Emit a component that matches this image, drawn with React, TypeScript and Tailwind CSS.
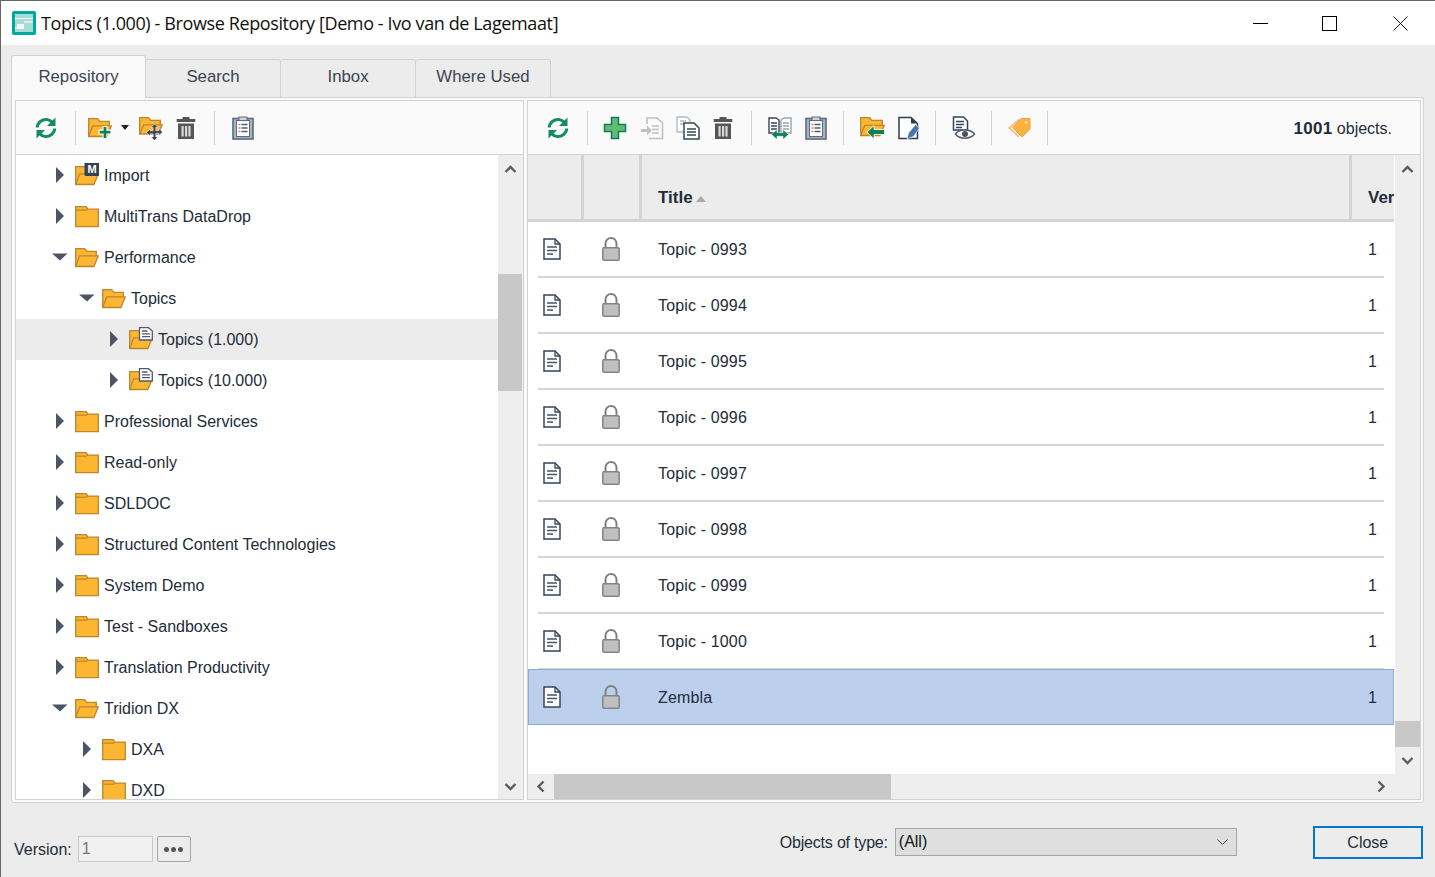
import React from 'react';

const STROKE = '#bd852e';
const FILL = '#fdb632';

const Refresh: React.FC = () => (
  <svg width="24" height="24" viewBox="0 0 24 24" fill="none">
    <g>
      <path d="M3.2 11.5C3.6 6.4 8.6 2.6 13.6 3.6c1.8.4 3 1.1 4.2 2.3" stroke="#188a62" strokeWidth="3" />
      <path d="M21.5 1.5v8.5h-8.5z" fill="#188a62" />
    </g>
    <g transform="rotate(180 12 12)">
      <path d="M3.2 11.5C3.6 6.4 8.6 2.6 13.6 3.6c1.8.4 3 1.1 4.2 2.3" stroke="#188a62" strokeWidth="3" />
      <path d="M21.5 1.5v8.5h-8.5z" fill="#188a62" />
    </g>
  </svg>
);

const FolderClosed: React.FC = () => (
  <svg width="24" height="24" viewBox="0 0 24 24">
    <path d="M.7 2.7h10.6l1.5 2.4h10.5v17.6H.7z" fill={FILL} stroke={STROKE} strokeWidth="1.3" />
    <path d="M.7 6.2h10.8l1.3-1.1" fill="none" stroke={STROKE} strokeWidth="1.2" />
  </svg>
);

const FolderOpen: React.FC<{ children?: React.ReactNode }> = ({ children }) => (
  <svg width="24" height="24" viewBox="0 0 24 24">
    <path d="M.7 21.5V3.7h9l2 2.6h9.6v4.5" fill={FILL} stroke={STROKE} strokeWidth="1.3" />
    <path d="M.7 21.5l4-10.7h18.6l-4.4 10.7z" fill={FILL} stroke={STROKE} strokeWidth="1.3" />
    {children}
  </svg>
);

const FolderImport: React.FC = () => (
  <FolderOpen>
    <rect x="9.500" y="-1" width="15" height="14" rx="1.500" fill="#37424f" />
    <text x="17" y="9.500" fontSize="11" fontWeight="700" fill="#fff" textAnchor="middle" fontFamily="Liberation Sans, sans-serif">M</text>
  </FolderOpen>
);

const FolderDoc: React.FC = () => (
  <FolderOpen>
    <path d="M10.500.7h9l3.800 3.300v9H10.500z" fill="#fff" stroke="#4f5a6c" strokeWidth="1.300" />
    <path d="M13 4h5.500M13 6.800h8M13 9.600h8" stroke="#4f5a6c" strokeWidth="1.300" />
  </FolderOpen>
);

const Trash: React.FC = () => (
  <svg width="24" height="24" viewBox="0 0 24 24" fill="#555">
    <path d="M8.5 1h7v2h5.8v3H2.7V3h5.8z" />
    <path d="M4 7.5h16V23H4z" />
    <path d="M7.5 10h2.2v10.5H7.5zM11 10h2.2v10.5H11zM14.4 10h2.2v10.5h-2.2z" fill="#d8d8d8" />
  </svg>
);

const Clipboard: React.FC = () => (
  <svg width="24" height="24" viewBox="0 0 24 24">
    <rect x="2" y="2.5" width="20" height="20.5" fill="#a9b4c5" stroke="#5c6a7e" strokeWidth="1.6" />
    <rect x="5.5" y="4.5" width="13" height="16" fill="#fff" stroke="#5c6a7e" strokeWidth="1" />
    <rect x="8" y="1" width="8" height="3.6" fill="#cfd5de" stroke="#5c6a7e" strokeWidth="1" />
    <path d="M7.5 8.5h2M7.5 12h2M7.5 15.5h2" stroke="#c9826b" strokeWidth="1.4" />
    <path d="M10.5 8.5h6M10.5 12h6M10.5 15.5h6" stroke="#4d5a6d" strokeWidth="1.4" />
  </svg>
);

const FolderPlus: React.FC = () => (
  <svg width="26" height="24" viewBox="0 0 26 24">
    <path d="M.7 20.5V2.7h9l2 2.6h9.6v4.5" fill={FILL} stroke={STROKE} strokeWidth="1.3" />
    <path d="M.7 20.5l4-10.7h18.6l-4.4 10.7z" fill={FILL} stroke={STROKE} strokeWidth="1.3" />
    <path d="M14.500 10h5v3.500h4v5h-4V23h-5v-4.500h-4v-5h4z" fill="#fff" />
    <path d="M15.600 11h2.800v3.700h4v2.800h-4V22h-2.800v-4.500h-4v-2.800h4z" fill="#11805a" />
  </svg>
);

const FolderMove: React.FC = () => (
  <svg width="24" height="24" viewBox="0 0 24 24">
    <path d="M.7 18V1.700h9l2 2.600h9.600v5" fill={FILL} stroke={STROKE} strokeWidth="1.300" />
    <path d="M.7 18l4-9.200h18.600L19 18z" fill={FILL} stroke={STROKE} strokeWidth="1.300" />
    <path d="M15.500 8l3.500 3.500h-2.200v3.200H20v-2.200l3.500 3.500-3.500 3.500v-2.200h-3.200V21H19l-3.500 3.500L12 21h2.200v-3.200H11V20l-3.500-3.500L11 13v1.700h3.200v-3.200H12z" fill="#36455e" stroke="#fff" strokeWidth=".5" />
  </svg>
);

const PlusIcon: React.FC = () => (
  <svg width="24" height="24" viewBox="0 0 24 24">
    <path d="M8.500 1.500h7v7h7v7h-7v7h-7v-7h-7v-7h7z" fill="#62bb72" stroke="#0f7f55" strokeWidth="1.500" />
  </svg>
);

const DocArrow: React.FC = () => (
  <svg width="24" height="24" viewBox="0 0 24 24" fill="none" stroke="#c0c0c0" strokeWidth="1.600">
    <path d="M7 8V2h10l5.500 5v15.500H9" />
    <path d="M12 10h7M12 13.500h7M12 17h7" />
    <path d="M1 13h6V9.500l5 5-5 5V16H1z" fill="#c0c0c0" stroke="none" />
  </svg>
);

const CopyDoc: React.FC = () => (
  <svg width="24" height="24" viewBox="0 0 24 24" fill="none">
    <path d="M1 1h10l3 3v12H1z" fill="#fff" stroke="#b5b9c0" strokeWidth="1.300" />
    <path d="M4 5h6M4 8h6" stroke="#b5b9c0" strokeWidth="1.300" />
    <path d="M8 7h10l5 5v11H8z" fill="#fff" stroke="#37455a" strokeWidth="1.500" />
    <path d="M11 13h9M11 16h9M11 19h9" stroke="#37455a" strokeWidth="1.300" />
  </svg>
);

const Compare: React.FC = () => (
  <svg width="24" height="24" viewBox="0 0 24 24" fill="none">
    <path d="M1 2h7l3 2v13H1z" fill="#fff" stroke="#36445a" strokeWidth="1.400" />
    <path d="M3 7h6M3 10h6M3 13h6" stroke="#36445a" strokeWidth="1.300" />
    <path d="M13 4l3-2h7v15H13z" fill="#fff" stroke="#9aa3b0" strokeWidth="1.400" />
    <path d="M15 7h6M15 10h6M15 13h6" stroke="#9aa3b0" strokeWidth="1.300" />
    <path d="M3.500 18.500l5.500-5v3.200h6v-3.200l5.500 5-5.500 5v-3.200H9v3.200z" fill="#11805a" stroke="#fff" strokeWidth=".5" />
  </svg>
);

const FolderBack: React.FC = () => (
  <svg width="25" height="24" viewBox="0 0 25 24">
    <path d="M.7 19.500V1.700h9l2 2.600h10.600v5" fill={FILL} stroke={STROKE} strokeWidth="1.300" />
    <path d="M.7 19.500l4-10.200h19.600L20 19.500z" fill={FILL} stroke={STROKE} strokeWidth="1.300" />
    <path d="M14 9.500v4h10.500v5H14v4.500l-7-7z" fill="#11805a" stroke="#fff" strokeWidth=".8" />
  </svg>
);

const DocPen: React.FC = () => (
  <svg width="24" height="24" viewBox="0 0 24 24" fill="none">
    <path d="M2 1.500h12l6.500 6V22.500H2z" fill="#fff" stroke="#2f3d52" strokeWidth="1.500" />
    <path d="M14 1.500l6.500 6H14z" fill="#2f3d52" />
    <path d="M18.500 8.500l4 3.500-6 8.500-6.500 2.500 1.500-6z" fill="#4477b0" stroke="#fff" strokeWidth=".6" />
  </svg>
);

const DocEye: React.FC = () => (
  <svg width="24" height="24" viewBox="0 0 24 24" fill="none">
    <path d="M1.500 1h10l4 4v9H1.500z" fill="#fff" stroke="#36445a" strokeWidth="1.500" />
    <path d="M4 5.500h8M4 8.500h8M4 11.500h6" stroke="#36445a" strokeWidth="1.300" />
    <path d="M3.500 18c3.500-5.500 15-5.500 19 0-4 5.500-15.500 5.500-19 0z" fill="#fff" stroke="#555f6c" strokeWidth="1.500" />
    <circle cx="13" cy="18" r="3" fill="#4a5460" />
  </svg>
);

const TagIcon: React.FC = () => (
  <svg width="24" height="24" viewBox="0 0 24 24" fill="none">
    <path d="M12 3.500L2.200 12l9.800 9" stroke="#ecc48c" strokeWidth="1.800" />
    <path d="M14 2.500h9v10.500l-8 8-9.500-9.500z" fill="#fdb23f" stroke="#e8a63f" strokeWidth="1" />
    <circle cx="19.200" cy="6.200" r="1.300" fill="#fbe9cb" />
  </svg>
);

const ArrowRight: React.FC = () => (
  <svg width="10" height="16" viewBox="0 0 10 16"><path d="M1 0l8 8-8 8z" fill="#4b5566" /></svg>
);

const ArrowDown: React.FC = () => (
  <svg width="16" height="8" viewBox="0 0 16 8"><path d="M0 .5h15.500L8 7.500z" fill="#4b5566" /></svg>
);

const Chevron: React.FC<{ dir: 'up' | 'down' | 'left' | 'right' }> = ({ dir }) => {
  const d = {
    up: 'M1.500 8L6.500 3l5 5',
    down: 'M1.500 4l5 5 5-5',
    left: 'M8.500 1.500l-5 5 5 5',
    right: 'M4.500 1.500l5 5-5 5',
  }[dir];
  return (
    <svg width="13" height="13" viewBox="0 0 13 13" fill="none">
      <path d={d} stroke="#5c5c5c" strokeWidth="2.400" />
    </svg>
  );
};

const Separator: React.FC<{ className: string }> = ({ className }) => (
  <div className={`w-px h-[34px] bg-[#d2d2d2] ${className}`} />
);

const tree = [
  { label: 'Import', level: 0, open: false, icon: <FolderImport /> },
  { label: 'MultiTrans DataDrop', level: 0, open: false, icon: <FolderClosed /> },
  { label: 'Performance', level: 0, open: true, icon: <FolderOpen /> },
  { label: 'Topics', level: 1, open: true, icon: <FolderOpen /> },
  { label: 'Topics (1.000)', level: 2, open: false, icon: <FolderDoc />, selected: true },
  { label: 'Topics (10.000)', level: 2, open: false, icon: <FolderDoc /> },
  { label: 'Professional Services', level: 0, open: false, icon: <FolderClosed /> },
  { label: 'Read-only', level: 0, open: false, icon: <FolderClosed /> },
  { label: 'SDLDOC', level: 0, open: false, icon: <FolderClosed /> },
  { label: 'Structured Content Technologies', level: 0, open: false, icon: <FolderClosed /> },
  { label: 'System Demo', level: 0, open: false, icon: <FolderClosed /> },
  { label: 'Test - Sandboxes', level: 0, open: false, icon: <FolderClosed /> },
  { label: 'Translation Productivity', level: 0, open: false, icon: <FolderClosed /> },
  { label: 'Tridion DX', level: 0, open: true, icon: <FolderOpen /> },
  { label: 'DXA', level: 1, open: false, icon: <FolderClosed /> },
  { label: 'DXD', level: 1, open: false, icon: <FolderClosed /> },
];

const rows = ['Topic - 0993', 'Topic - 0994', 'Topic - 0995', 'Topic - 0996', 'Topic - 0997', 'Topic - 0998', 'Topic - 0999', 'Topic - 1000', 'Zembla'];

const levelPadding = ['pl-[36px]', 'pl-[63px]', 'pl-[90px]'];

const TreeRow: React.FC<{ item: (typeof tree)[number] }> = ({ item }) => (
  <div className={`flex items-center h-[41px] shrink-0 ${levelPadding[item.level]} ${item.selected ? 'bg-[#ececec]' : ''}`}>
    <div className="w-[16px] flex justify-center -mt-px">{item.open ? <ArrowDown /> : <ArrowRight />}</div>
    <div className="ml-[7px] -mt-[2px]">{item.icon}</div>
    <span className="ml-[5px] whitespace-nowrap">{item.label}</span>
  </div>
);

const TopicRow: React.FC<{ title: string; selected: boolean }> = ({ title, selected }) => (
  <div className={`h-[56px] shrink-0 ${selected ? '-mt-px pt-[2px] bg-[#bcd0ee] border border-[#8fabd8]' : ''}`}>
    <div className={`h-full flex items-center ${selected ? 'mx-[9px]' : 'mx-[10px] pt-[2px] border-b-2 border-[#d6d6d6]'}`}>
      <svg className="ml-[5px] -mt-[2px]" width="18" height="22" viewBox="0 0 18 22" fill="none">
        <path d="M1 1h11l5 5v15H1z" fill="#fff" stroke="#36445a" strokeWidth="1.500" />
        <path d="M12 1v5h5" stroke="#36445a" strokeWidth="1.300" />
        <path d="M4 9h10M4 12.500h10M4 16h6" stroke="#4a5667" strokeWidth="1.400" />
      </svg>
      <svg className="ml-[41px] -mt-[2px]" width="18" height="24" viewBox="0 0 18 24" fill="none">
        <path d="M3.500 11V6.500a5.500 5.500 0 0 1 11 0V11" stroke="#808080" strokeWidth="2" />
        <rect x=".8" y="10.800" width="16.400" height="12.400" rx="1" fill="#bfbfbf" stroke="#858585" strokeWidth="1.500" />
      </svg>
      <span className="ml-[38px] flex-1 tracking-[0.15px]">{title}</span>
      <span className="mr-[7px]">1</span>
    </div>
  </div>
);

const App: React.FC = () => {
  return (
    <div className="w-[1435px] h-[877px] overflow-hidden flex flex-col border-t border-l border-[#666] bg-[#ececec] text-[16px] text-[#232c39] font-['Liberation_Sans',Arial,sans-serif]">
      {/* Title bar */}
      <div className="h-[44px] shrink-0 bg-white flex items-center">
        <svg className="ml-[11px]" width="24" height="24" viewBox="0 0 24 24">
          <rect width="24" height="24" rx="2" fill="#00a99d" />
          <rect x="3" y="3" width="18" height="18" fill="#a5dcd8" />
          <path d="M3 7.500h18M12 11h9M3 17h6" stroke="#fff" strokeWidth="1.200" />
          <rect x="5" y="13" width="7" height="5" fill="#f2fbfa" />
        </svg>
        <span className="ml-[5px] text-[18px] tracking-[-0.385px] text-[#111] font-['Open_Sans',sans-serif] whitespace-nowrap">
          Topics (1.000) - Browse Repository [Demo - Ivo van de Lagemaat]
        </span>
        <div className="ml-auto flex items-center">
          <div className="w-[15px] h-px bg-black" />
          <div className="ml-[54px] w-[15px] h-[15px] border border-black" />
          <svg className="ml-[56px] mr-[27px]" width="15" height="15" viewBox="0 0 15 15">
            <path d="M.5.5l14 14M14.500.5l-14 14" stroke="#111" strokeWidth="1" />
          </svg>
        </div>
      </div>

      <div className="flex-1 flex flex-col px-[10px] min-h-0">
        {/* Tabs */}
        <div className="mt-[11px] h-[42px] shrink-0 flex items-end relative z-10 -mb-px text-[16.8px] text-[#3b4452]">
          <div className="w-[135px] h-[43px] bg-[#fafafa] border border-b-0 border-[#d2d2d2] rounded-t-[3px] flex items-center justify-center">Repository</div>
          <div className="w-[135px] h-[39px] pb-[4px] border border-l-0 border-[#d2d2d2] rounded-t-[3px] flex items-center justify-center">Search</div>
          <div className="w-[135px] h-[39px] pb-[4px] border border-l-0 border-[#d2d2d2] rounded-t-[3px] flex items-center justify-center">Inbox</div>
          <div className="w-[135px] h-[39px] pb-[4px] border border-l-0 border-[#d2d2d2] rounded-t-[3px] flex items-center justify-center">Where Used</div>
        </div>

        <div className="w-[1413px] h-[706px] shrink-0 bg-[#fafafa] border border-[#d2d2d2] rounded-b-[3px] pl-[3px] pr-[2px] pt-[2px] pb-[2px] flex gap-[3px]">
          {/* Left pane */}
          <div className="w-[509px] shrink-0 border border-[#d2d2d2] flex flex-col">
            <div className="h-[54px] shrink-0 border-b border-[#d2d2d2] bg-[#fafafa] flex items-center">
              <div className="ml-[18px]"><Refresh /></div>
              <Separator className="ml-[17px]" />
              <div className="ml-[12px]"><FolderPlus /></div>
              <svg className="ml-[7px]" width="8" height="5" viewBox="0 0 8 5"><path d="M0 0h8L4 5z" fill="#222" /></svg>
              <div className="ml-[10px]"><FolderMove /></div>
              <div className="ml-[11px]"><Trash /></div>
              <Separator className="ml-[16px]" />
              <div className="ml-[16px]"><Clipboard /></div>
            </div>
            <div className="flex-1 flex min-h-0 bg-white">
              <div className="flex-1 flex flex-col overflow-hidden">
                {tree.map(item => <TreeRow key={item.label + item.level} item={item} />)}
              </div>
              <div className="w-[25px] shrink-0 bg-[#eeeeee] flex flex-col">
                <div className="h-[30px] shrink-0 flex items-center justify-center"><Chevron dir="up" /></div>
                <div className="mt-[89px] h-[117px] w-[24px] bg-[#c8c8c8]" />
                <div className="mt-auto h-[26px] flex items-center justify-center"><Chevron dir="down" /></div>
              </div>
            </div>
          </div>

          {/* Right pane */}
          <div className="flex-1 min-w-0 border border-[#d2d2d2] flex flex-col">
            <div className="h-[54px] shrink-0 border-b border-[#d2d2d2] bg-[#fafafa] flex items-center">
              <div className="ml-[18px]"><Refresh /></div>
              <Separator className="ml-[17px]" />
              <div className="ml-[15px]"><PlusIcon /></div>
              <div className="ml-[13px]"><DocArrow /></div>
              <div className="ml-[12px]"><CopyDoc /></div>
              <div className="ml-[11px]"><Trash /></div>
              <Separator className="ml-[16px]" />
              <div className="ml-[16px]"><Compare /></div>
              <div className="ml-[12px]"><Clipboard /></div>
              <Separator className="ml-[15px]" />
              <div className="ml-[16px]"><FolderBack /></div>
              <div className="ml-[12px]"><DocPen /></div>
              <Separator className="ml-[14px]" />
              <div className="ml-[16px]"><DocEye /></div>
              <Separator className="ml-[15px]" />
              <div className="ml-[15px]"><TagIcon /></div>
              <Separator className="ml-[16px]" />
              <span className="ml-auto mr-[28px] mt-[2px] whitespace-nowrap"><span className="font-bold text-[17px] tracking-[0.3px]">1001</span> objects.</span>
            </div>

            <div className="flex-1 flex min-h-0">
              <div className="flex-1 min-w-0 flex flex-col bg-white overflow-hidden">
                {/* Column headers */}
                <div className="h-[67px] shrink-0 bg-[#ececec] border-b-[3px] border-[#d4d4d4] flex font-bold text-[17px]">
                  <div className="w-[56px] shrink-0 border-r-[3px] border-[#d4d4d4]" />
                  <div className="w-[58px] shrink-0 border-r-[3px] border-[#d4d4d4]" />
                  <div className="flex-1 flex items-center pl-[16px] pt-[21px] border-r-[3px] border-[#d4d4d4]">
                    Title
                    <svg className="ml-[3px] mt-[2px]" width="10" height="6" viewBox="0 0 10 6"><path d="M5 0l5 6H0z" fill="#aaa" /></svg>
                  </div>
                  <div className="w-[42px] shrink-0 overflow-hidden flex items-center pl-[16px] pt-[21px]">Version</div>
                </div>
                {rows.map(title => <TopicRow key={title} title={title} selected={title === 'Zembla'} />)}
              </div>
              <div className="w-[26px] shrink-0 bg-[#eeeeee] flex flex-col border-l border-white">
                <div className="h-[30px] shrink-0 flex items-center justify-center"><Chevron dir="up" /></div>
                <div className="mt-[536px] h-[26px] bg-[#c8c8c8]" />
                <div className="mt-[5px] h-[16px] flex items-center justify-center"><Chevron dir="down" /></div>
              </div>
            </div>

            {/* Horizontal scrollbar */}
            <div className="h-[25px] shrink-0 bg-[#eeeeee] flex items-center">
              <div className="w-[26px] flex justify-center"><Chevron dir="left" /></div>
              <div className="w-[337px] h-full bg-[#c8c8c8]" />
              <div className="ml-[483px]"><Chevron dir="right" /></div>
            </div>
          </div>
        </div>

        {/* Footer */}
        <div className="flex items-start">
          <span className="ml-[3px] mt-[35px]">Version:</span>
          <div className="ml-[6px] mt-[33px] w-[75px] h-[26px] bg-[#f0f0f0] border border-[#c8c8c8] text-[#777] pl-[3px] leading-[24px]">1</div>
          <div className="ml-[4px] mt-[33px] w-[34px] h-[26px] border border-[#a8a8a8] rounded-[2px] flex items-center justify-center gap-[2px]">
            <span className="w-[5px] h-[5px] rounded-full bg-[#555]" />
            <span className="w-[5px] h-[5px] rounded-full bg-[#555]" />
            <span className="w-[5px] h-[5px] rounded-full bg-[#555]" />
          </div>
          <span className="ml-[589px] mt-[28px] w-[108px] shrink-0 whitespace-nowrap tracking-[-0.2px]">Objects of type:</span>
          <div className="ml-[7px] mt-[25px] w-[342px] shrink-0 h-[28px] bg-[#dfdfdf] border border-[#a6a6a6] flex items-center pl-[3px] pr-[8px] text-[#111]">
            (All)
            <svg className="ml-auto" width="11" height="7" viewBox="0 0 11 7" fill="none"><path d="M.5.5l5 5 5-5" stroke="#444" strokeWidth="1" /></svg>
          </div>
          <div className="ml-[76px] mt-[23px] w-[110px] shrink-0 h-[33px] border-2 border-[#0078d4] flex items-center justify-center">Close</div>
        </div>
      </div>
    </div>
  );
};

export default App;
